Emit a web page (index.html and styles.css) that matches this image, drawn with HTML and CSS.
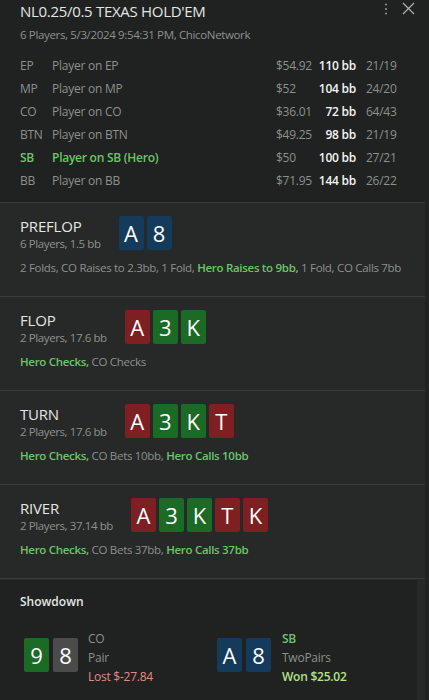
FILE: index.html
```html
<!DOCTYPE html>
<html lang="en">
<head>
    <meta charset="UTF-8">
    <meta name="viewport" content="width=device-width, initial-scale=1.0">
    <title>Hand History</title>
    <link rel="stylesheet" href="styles.css">
</head>
<body>
    <div class="panel">
        <div class="scroll-thumb"></div>

        <div class="header">
            <div class="title-row">
                <h1>NL0.25/0.5 TEXAS HOLD'EM</h1>
                <div class="tools">
                    <svg class="kebab" width="4" height="12" viewBox="0 0 4 12">
                        <circle cx="2" cy="1.5" r="1.1" fill="#8a8f8c"/>
                        <circle cx="2" cy="6" r="1.1" fill="#8a8f8c"/>
                        <circle cx="2" cy="10.5" r="1.1" fill="#8a8f8c"/>
                    </svg>
                    <svg class="close" width="13" height="13" viewBox="0 0 13 13">
                        <path d="M1 1 L12 12 M12 1 L1 12" stroke="#a9adab" stroke-width="1.3"/>
                    </svg>
                </div>
            </div>
            <div class="subtitle">6 Players, 5/3/2024 9:54:31 PM, ChicoNetwork</div>

            <div class="players">
                <div class="player">
                    <span class="pos">EP</span><span class="name">Player on EP</span>
                    <span class="stack">$54.92</span><span class="bb">110 bb</span><span class="ratio">21/19</span>
                </div>
                <div class="player">
                    <span class="pos">MP</span><span class="name">Player on MP</span>
                    <span class="stack">$52</span><span class="bb">104 bb</span><span class="ratio">24/20</span>
                </div>
                <div class="player">
                    <span class="pos">CO</span><span class="name">Player on CO</span>
                    <span class="stack">$36.01</span><span class="bb">72 bb</span><span class="ratio">64/43</span>
                </div>
                <div class="player">
                    <span class="pos">BTN</span><span class="name">Player on BTN</span>
                    <span class="stack">$49.25</span><span class="bb">98 bb</span><span class="ratio">21/19</span>
                </div>
                <div class="player hero">
                    <span class="pos">SB</span><span class="name">Player on SB (Hero)</span>
                    <span class="stack">$50</span><span class="bb">100 bb</span><span class="ratio">27/21</span>
                </div>
                <div class="player">
                    <span class="pos">BB</span><span class="name">Player on BB</span>
                    <span class="stack">$71.95</span><span class="bb">144 bb</span><span class="ratio">26/22</span>
                </div>
            </div>
        </div>

        <div class="street">
            <div class="street-head">
                <div class="street-info">
                    <h2>PREFLOP</h2>
                    <div class="street-sub">6 Players, 1.5 bb</div>
                </div>
                <div class="cards">
                    <span class="card blue">A</span><span class="card blue">8</span>
                </div>
            </div>
            <div class="actions">2 Folds, CO Raises to 2.3bb, 1 Fold, <b>Hero Raises to 9bb,</b> 1 Fold, CO Calls 7bb</div>
        </div>

        <div class="street">
            <div class="street-head">
                <div class="street-info">
                    <h2>FLOP</h2>
                    <div class="street-sub">2 Players, 17.6 bb</div>
                </div>
                <div class="cards">
                    <span class="card red">A</span><span class="card green">3</span><span class="card green">K</span>
                </div>
            </div>
            <div class="actions"><b>Hero Checks,</b> CO Checks</div>
        </div>

        <div class="street">
            <div class="street-head">
                <div class="street-info">
                    <h2>TURN</h2>
                    <div class="street-sub">2 Players, 17.6 bb</div>
                </div>
                <div class="cards">
                    <span class="card red">A</span><span class="card green">3</span><span class="card green">K</span><span class="card red">T</span>
                </div>
            </div>
            <div class="actions"><b>Hero Checks,</b> CO Bets 10bb, <b>Hero Calls 10bb</b></div>
        </div>

        <div class="street">
            <div class="street-head">
                <div class="street-info">
                    <h2>RIVER</h2>
                    <div class="street-sub">2 Players, 37.14 bb</div>
                </div>
                <div class="cards">
                    <span class="card red">A</span><span class="card green">3</span><span class="card green">K</span><span class="card red">T</span><span class="card red">K</span>
                </div>
            </div>
            <div class="actions"><b>Hero Checks,</b> CO Bets 37bb, <b>Hero Calls 37bb</b></div>
        </div>

        <div class="showdown">
            <h3>Showdown</h3>
            <div class="results">
                <div class="result">
                    <div class="cards">
                        <span class="card green">9</span><span class="card grey">8</span>
                    </div>
                    <div class="result-info">
                        <div>CO</div>
                        <div>Pair</div>
                        <div class="lost">Lost $-27.84</div>
                    </div>
                </div>
                <div class="result">
                    <div class="cards">
                        <span class="card blue">A</span><span class="card blue">8</span>
                    </div>
                    <div class="result-info">
                        <div class="hero-pos">SB</div>
                        <div>TwoPairs</div>
                        <div class="won">Won $25.02</div>
                    </div>
                </div>
            </div>
        </div>
    </div>
</body>
</html>
```

FILE: styles.css
```css
body {
    margin: 0;
    background-color: #1f2220;
    font-family: "Open Sans", "Noto Sans", sans-serif;
    color: #8c918e;
}
.panel {
    position: relative;
    width: 429px;
    height: 700px;
    overflow: hidden;
    background: #262927;
    border-right: 4px solid #1f2220;
    box-sizing: border-box;
}
.scroll-thumb {
    position: absolute;
    top: 0;
    right: -4px;
    width: 3px;
    height: 39px;
    background: #2e6a3e;
}
.header {
    background: #1f2220;
    padding: 0 20px 10px;
    border-bottom: 1px solid #393c3a;
}
.title-row {
    display: flex;
    justify-content: space-between;
    align-items: flex-start;
}
h1 {
    margin: 1px 0 0;
    font-size: 15px;
    font-weight: 400;
    color: #e4e6e5;
    letter-spacing: -0.3px;
}
.tools {
    display: flex;
    align-items: flex-start;
    gap: 14px;
    margin-right: -10px;
    padding-top: 2px;
}
.kebab {
    margin-top: 1px;
}
.subtitle {
    font-size: 11.5px;
    margin-top: 6px;
    letter-spacing: -0.35px;
}
.players {
    margin-top: 12px;
}
.player {
    display: grid;
    grid-template-columns: 32px 224px 40px 40px 39px;
    height: 23px;
    align-items: center;
    font-size: 12px;
    letter-spacing: -0.25px;
}
.player .bb {
    text-align: right;
    color: #f2f3f2;
    font-weight: 600;
}
.player .ratio {
    padding-left: 10px;
}
.player.hero .pos,
.player.hero .name {
    color: #6cc46c;
    font-weight: 600;
}
.street {
    padding: 13px 20px 0;
    height: 94px;
    box-sizing: border-box;
    border-bottom: 1px solid #393c3a;
}
.street-head {
    display: flex;
    align-items: flex-start;
    gap: 18px;
}
h2 {
    margin: 0;
    padding-top: 1px;
    font-size: 15px;
    font-weight: 400;
    color: #e4e6e5;
    line-height: 19px;
    letter-spacing: -0.2px;
}
.street-sub {
    font-size: 11.5px;
    line-height: 16px;
    letter-spacing: -0.4px;
}
.cards {
    display: flex;
    gap: 3px;
}
.card {
    width: 25px;
    height: 34px;
    border-radius: 2px;
    display: flex;
    align-items: center;
    justify-content: center;
    color: #ffffff;
    font-size: 22px;
}
.card.blue {
    background: #143a5c;
}
.card.red {
    background: #7e1f22;
}
.card.green {
    background: #1b6a26;
}
.card.grey {
    background: #4a4c4b;
}
.actions {
    margin-top: 8px;
    font-size: 11.5px;
    letter-spacing: -0.3px;
    white-space: nowrap;
}
.actions b {
    color: #6cc46c;
    font-weight: 600;
}
.showdown {
    background: #1f2220;
    margin-right: 8px;
    padding: 13px 20px 20px;
    border-top: 1px solid #2a2d2b;
}
h3 {
    margin: 0;
    font-size: 12px;
    font-weight: 600;
    color: #e4e6e5;
}
.results {
    display: flex;
    margin-top: 28px;
    padding-left: 4px;
}
.result {
    display: flex;
    flex-shrink: 0;
    align-items: flex-start;
    gap: 10px;
    width: 193px;
}
.result:last-child {
    gap: 11px;
}
.result .cards {
    gap: 4px;
}
.result-info {
    font-size: 12px;
    line-height: 19px;
    margin-top: -9px;
    letter-spacing: -0.25px;
}
.hero-pos {
    color: #6cc46c;
    font-weight: 600;
}
.lost {
    color: #e48a86;
}
.won {
    color: #b6e08c;
    font-weight: 600;
}
```
